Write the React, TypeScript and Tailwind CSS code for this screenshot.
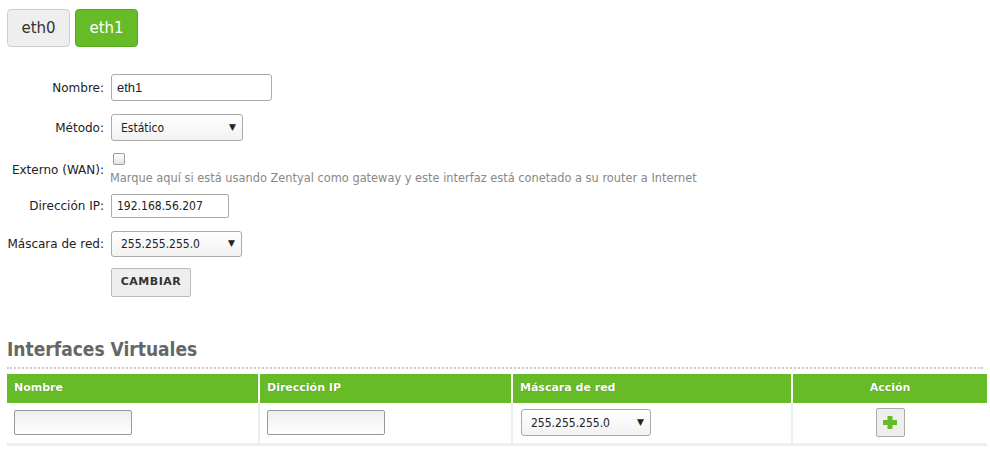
import React from 'react';

const SANS = "font-['DejaVu_Sans',Verdana,sans-serif]";
const COND = "font-['DejaVu_Sans_Condensed','DejaVu_Sans',sans-serif]";

const Label: React.FC<{ text: string }> = ({ text }) => (
    <div className="w-[104px] shrink-0 text-right text-[12px] text-[#222]">{text}</div>
);

const Select: React.FC<{ value: string; width: string; height: string }> = ({ value, width, height }) => (
    <div className={`relative ${width} ${height}`}>
        <select
            defaultValue={value}
            className={`${COND} h-full w-full appearance-none rounded-[3px] border border-[#aaa] bg-gradient-to-b from-white to-[#f2f2f2] pl-[9px] text-[12px] text-[#222] outline-none`}
        >
            <option>{value}</option>
        </select>
        <span className="pointer-events-none absolute right-[7px] top-1/2 -translate-y-1/2 text-[9px] text-[#222]">▼</span>
    </div>
);

const PlusIcon = () => (
    <svg width="14" height="13" viewBox="0 0 14 13">
        <rect x="4.5" y="0" width="5" height="13" fill="#67bb27" />
        <rect x="0" y="4" width="14" height="5" fill="#67bb27" />
    </svg>
);

export default function App() {
    return (
        <div className={`${SANS} w-[990px] h-[449px] overflow-hidden bg-white text-[#222]`}>
            {/* interface tabs */}
            <div className="flex gap-[5px] pl-[7px] pt-[9px]">
                <button className="h-[38px] w-[63px] rounded-[4px] border border-[#ccc] bg-[#eeeeee] text-[15px] text-[#333]">
                    eth0
                </button>
                <button className="h-[38px] w-[63px] rounded-[4px] border border-[#5aa61f] bg-[#67bb27] text-[15px] text-white">
                    eth1
                </button>
            </div>

            {/* form */}
            <div className="mt-[27px] flex flex-col">
                <div className="flex items-center gap-[7px]">
                    <Label text="Nombre:" />
                    <input
                        defaultValue="eth1"
                        className="h-[27px] w-[161px] rounded-[3px] border border-[#aaa] px-[5px] font-['Liberation_Sans',Arial,sans-serif] text-[13px] text-[#222] outline-none"
                    />
                </div>
                <div className="mt-[13px] flex items-center gap-[7px]">
                    <Label text="Método:" />
                    <Select value="Estático" width="w-[132px]" height="h-[27px]" />
                </div>
                <div className="mt-[12px] flex items-center gap-[6px]">
                    <Label text="Externo (WAN):" />
                    <div className="flex flex-col">
                        <div className="ml-[3px] h-[12px] w-[12px] rounded-[2px] border border-[#999] bg-gradient-to-b from-white to-[#e4e4e4]" />
                        <div className="mt-[5px] text-[11.4px] text-[#888]">
                            Marque aquí si está usando Zentyal como gateway y este interfaz está conetado a su router a Internet
                        </div>
                    </div>
                </div>
                <div className="mt-[7px] flex items-center gap-[7px]">
                    <Label text="Dirección IP:" />
                    <input
                        defaultValue="192.168.56.207"
                        className={`${COND} h-[24px] w-[118px] rounded-[2px] border border-[#aaa] px-[5px] text-[12px] text-[#222] outline-none`}
                    />
                </div>
                <div className="mt-[13px] flex items-center gap-[7px]">
                    <Label text="Máscara de red:" />
                    <Select value="255.255.255.0" width="w-[131px]" height="h-[26px]" />
                </div>
                <div className="mt-[11px] flex items-center gap-[7px]">
                    <div className="w-[104px]" />
                    <button className="h-[29px] w-[80px] rounded-[2px] border border-[#bbb] bg-[#eeeeee] text-[11px] font-bold tracking-[0.5px] text-[#333]">
                        CAMBIAR
                    </button>
                </div>
            </div>

            {/* virtual interfaces */}
            <div className="mt-[41px] px-[7px]">
                <h2 className={`${COND} text-[19px] font-bold leading-[22px] text-[#666]`}>Interfaces Virtuales</h2>
                <div className="mt-[7px] border-t-2 border-dotted border-[#ccc]" />
                <table className="mt-[5px] w-[980px] table-fixed border-collapse">
                    <thead>
                        <tr className="h-[29px] bg-[#67bb27] text-[11px] font-bold text-white [text-shadow:0_0_1px_rgba(0,0,0,0.35)]">
                            <th className="w-[252px] border-r-2 border-white pl-[7px] text-left">Nombre</th>
                            <th className="w-[253px] border-r-2 border-white pl-[7px] text-left">Dirección IP</th>
                            <th className="w-[280px] border-r-2 border-white pl-[7px] text-left">Máscara de red</th>
                            <th className="text-center">Acción</th>
                        </tr>
                    </thead>
                    <tbody>
                        <tr className="h-[41px] border-b-[3px] border-[#eee]">
                            <td className="border-r-2 border-[#eee] pl-[7px]">
                                <input className="h-[25px] w-[118px] rounded-[2px] border border-[#999] bg-gradient-to-b from-[#eee] to-white outline-none" />
                            </td>
                            <td className="border-r-2 border-[#eee] pl-[7px]">
                                <input className="h-[25px] w-[118px] rounded-[2px] border border-[#999] bg-gradient-to-b from-[#eee] to-white outline-none" />
                            </td>
                            <td className="border-r-2 border-[#eee] pl-[8px]">
                                <Select value="255.255.255.0" width="w-[130px]" height="h-[27px]" />
                            </td>
                            <td>
                                <div className="flex justify-center">
                                    <button className="flex h-[29px] w-[29px] items-center justify-center rounded-[2px] border border-[#aaa] bg-[#eeeeee]">
                                        <PlusIcon />
                                    </button>
                                </div>
                            </td>
                        </tr>
                    </tbody>
                </table>
            </div>
        </div>
    );
}
